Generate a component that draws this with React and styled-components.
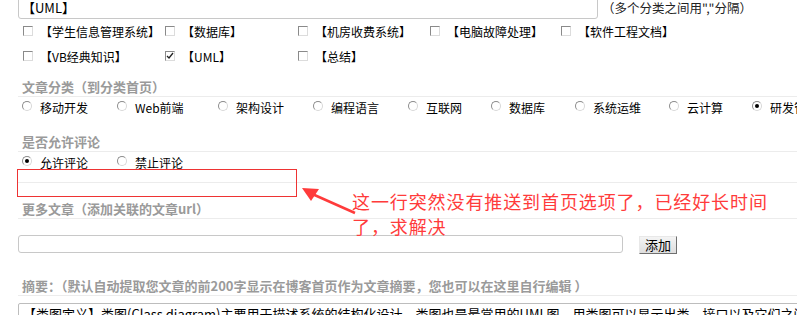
import React from "react";
import styled, { createGlobalStyle } from "styled-components";

const GlobalStyle = createGlobalStyle`
  html, body {
    margin: 0;
    padding: 0;
    background: #fff;
    overflow: hidden;
  }
  body {
    font-family: "Noto Sans CJK SC", "DejaVu Sans", sans-serif;
    font-size: 12px;
    color: #000;
  }
`;

const Page = styled.div`
  position: relative;
  width: 1000px;
  height: 320px;
  padding-left: 18px;
  box-sizing: border-box;
`;

const TopRow = styled.div`
  display: flex;
  align-items: center;
  margin-top: -5px;
  height: 24px;
`;

const TextBox = styled.div`
  box-sizing: border-box;
  width: ${(p) => p.width}px;
  height: ${(p) => p.height}px;
  border: 1px solid #c8c8c8;
  border-radius: 3px;
  padding-left: 3px;
  display: flex;
  align-items: center;
  font-size: 13px;
  background: #fff;
`;

const Note = styled.span`
  margin-left: 4px;
  font-size: 12.5px;
  color: #222;
`;

const CheckGrid = styled.div`
  display: grid;
  grid-template-columns: 142px 133px 132px 131px auto;
  grid-auto-rows: 25px;
  padding-left: 5px;
`;

const Option = styled.label`
  display: flex;
  align-items: center;
  white-space: nowrap;
  flex: none;
  width: ${(p) => (p.width ? `${p.width}px` : "auto")};
`;

const Check = styled.span`
  box-sizing: border-box;
  width: 10px;
  height: 10px;
  border: 1px solid;
  border-color: #8a8a8a #dcdcdc #dcdcdc #8a8a8a;
  background: #fff;
  margin-right: 7px;
  position: relative;
  flex: none;
  margin-top: -2px;
`;

const Radio = styled.span`
  box-sizing: border-box;
  width: 10px;
  height: 10px;
  border-radius: 50%;
  border: 1px solid;
  border-color: #8c8c8c #d8d8d8 #d8d8d8 #8c8c8c;
  background: #fff;
  margin-right: 8px;
  flex: none;
  display: flex;
  align-items: center;
  justify-content: center;
  margin-top: -2px;

  &::after {
    content: "";
    width: 4px;
    height: 4px;
    border-radius: 50%;
    background: ${(p) => (p.checked ? "#000" : "transparent")};
  }
`;

const Heading = styled.div`
  margin-top: ${(p) => p.top}px;
  padding-left: 4px;
  height: 19px;
  line-height: 19px;
  border-bottom: 1px solid #ececec;
  font-size: 13px;
  font-weight: bold;
  color: #9a9a9a;
  white-space: nowrap;
`;

const RadioRow = styled.div`
  display: flex;
  align-items: center;
  height: 20px;
  padding-left: 4px;
`;

const Divider = styled.div`
  height: 10px;
  border-bottom: 1px solid #ececec;
`;

const UrlRow = styled.div`
  display: flex;
  align-items: center;
  margin-top: 15px;
  height: 19px;
`;

const Button = styled.button`
  margin-left: 16px;
  width: 38px;
  height: 18px;
  padding: 0;
  font-family: inherit;
  font-size: 13px;
  line-height: 14px;
  color: #000;
  background: linear-gradient(#f4f4f4, #dedede);
  border: 1px solid;
  border-color: #e8e8e8 #6f6f6f #6f6f6f #e8e8e8;
  margin-top: 2px;
`;

const SummaryBox = styled.div`
  margin-top: 7px;
  border: 1px solid #bdbdbd;
  border-radius: 2px;
  padding: 1px 4px;
  font-size: 13px;
  line-height: 18px;
  white-space: nowrap;
  height: 40px;
`;

const Highlight = styled.div`
  position: absolute;
  left: 17px;
  top: 174px;
  width: 280px;
  height: 28px;
  box-sizing: border-box;
  border: 1px solid #ee3333;
`;

const Annotation = styled.div`
  position: absolute;
  left: 352px;
  top: 194px;
  font-size: 18px;
  line-height: 25px;
  letter-spacing: 0.9px;
  color: #ff3b3b;
  white-space: nowrap;
`;

const Arrow = styled.svg`
  position: absolute;
  left: 298px;
  top: 186px;
`;

const tags = [
  ["【学生信息管理系统】", false],
  ["【数据库】", false],
  ["【机房收费系统】", false],
  ["【电脑故障处理】", false],
  ["【软件工程文档】", false],
  ["【VB经典知识】", false],
  ["【UML】", true],
  ["【总结】", false],
];

const categories = [
  ["移动开发", false, 95],
  ["Web前端", false, 101],
  ["架构设计", false, 95],
  ["编程语言", false, 95],
  ["互联网", false, 83],
  ["数据库", false, 84],
  ["系统运维", false, 94],
  ["云计算", false, 83],
  ["研发管理", true],
];

function App() {
  return (
    <Page>
      <GlobalStyle />
      <TopRow>
        <TextBox width={580} height={24}>【UML】</TextBox>
        <Note>（多个分类之间用","分隔）</Note>
      </TopRow>

      <CheckGrid>
        {tags.map(([name, checked]) => (
          <Option key={name}>
            <Check>
              {checked && (
                <svg width="8" height="8" viewBox="0 0 8 8" style={{ position: "absolute", left: 0, top: 0 }}>
                  <path d="M1 4 L3 6 L7 1" fill="none" stroke="#222" strokeWidth="1.3" />
                </svg>
              )}
            </Check>
            {name}
          </Option>
        ))}
      </CheckGrid>

      <Heading top={8}>文章分类（到分类首页）</Heading>
      <RadioRow>
        {categories.map(([name, checked, width]) => (
          <Option key={name} width={width}>
            <Radio checked={checked} />
            {name}
          </Option>
        ))}
      </RadioRow>

      <Heading top={15}>是否允许评论</Heading>
      <RadioRow>
        <Option width={95}>
          <Radio checked />
          允许评论
        </Option>
        <Option width={95}>
          <Radio />
          禁止评论
        </Option>
      </RadioRow>

      <Divider />

      <Heading top={16}>更多文章（添加关联的文章url）</Heading>
      <UrlRow>
        <TextBox width={605} height={18} />
        <Button>添加</Button>
      </UrlRow>

      <Heading top={23}>摘要：（默认自动提取您文章的前200字显示在博客首页作为文章摘要，您也可以在这里自行编辑 ）</Heading>
      <SummaryBox>
        【类图定义】类图(Class diagram)主要用于描述系统的结构化设计。类图也是最常用的UML图，用类图可以显示出类、接口以及它们之间的静态结构和关系。
      </SummaryBox>

      <Highlight />
      <Arrow width="62" height="36" viewBox="0 0 62 36">
        <path d="M57 32 L12 12" stroke="#ff3b3b" strokeWidth="2.5" fill="none" />
        <polygon points="4,7 21,8 13,20" fill="#ff3b3b" />
      </Arrow>
      <Annotation>
        <div>这一行突然没有推送到首页选项了，已经好长时间</div>
        <div>了，求解决</div>
      </Annotation>
    </Page>
  );
}

export default App;
